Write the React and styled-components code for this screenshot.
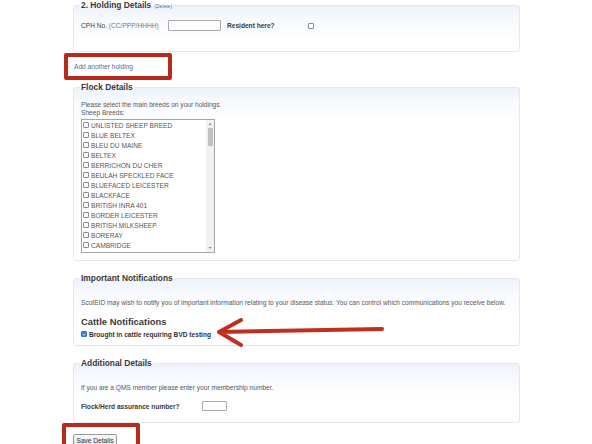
import React from "react";
import styled, { createGlobalStyle } from "styled-components";

const Global = createGlobalStyle`
  html, body { margin: 0; padding: 0; background: #fff; }
  body { font-family: "Liberation Sans", Arial, sans-serif; color: #333; }
`;

const Page = styled.div`
  position: relative;
  width: 592px;
  height: 444px;
  overflow: hidden;
  padding-left: 73px;
  box-sizing: border-box;
  display: flex;
  flex-direction: column;
  align-items: flex-start;
`;

const Panel = styled.fieldset`
  margin: ${(p) => p.$mt || 0}px 0 0 0;
  width: 447px;
  box-sizing: border-box;
  border: 1px solid #e3e8f0;
  border-radius: 3px;
  background: linear-gradient(to bottom, #edf2fb 0px, #f7f9fd 14px, #ffffff 34px);
  padding: ${(p) => p.$pt}px 8px ${(p) => p.$pb}px 7px;
  min-width: 0;
`;

const Legend = styled.legend`
  font-size: 8.4px;
  line-height: 10px;
  font-weight: bold;
  color: #3a3a3a;
  padding: 0 1px;
  margin-left: -1px;
`;

const DeleteLink = styled.span`
  font-size: 5px;
  font-weight: normal;
  color: #2f74b8;
  margin-left: 3px;
`;

const Row = styled.div`
  display: flex;
  align-items: center;
  height: ${(p) => p.$h || 11}px;
  margin-top: ${(p) => p.$mt || 0}px;
  font-size: 6.6px;
`;

const Label = styled.span`
  width: ${(p) => p.$w}px;
  flex: none;
  font-weight: ${(p) => (p.$bold ? "bold" : "normal")};
  color: #3a3a3a;
`;

const Hint = styled.span`
  color: #777;
`;

const TextBox = styled.span`
  display: block;
  width: ${(p) => p.$w}px;
  height: ${(p) => p.$h}px;
  box-sizing: border-box;
  border: 1px solid #a9a9a9;
  border-radius: 1px;
  background: #fff;
  margin-right: ${(p) => p.$mr || 0}px;
`;

const Box = styled.span`
  display: inline-flex;
  align-items: center;
  justify-content: center;
  width: 6px;
  height: 6px;
  flex: none;
  box-sizing: border-box;
  border: 1px solid ${(p) => (p.$checked ? "#2a78cc" : "#8a8a8a")};
  background: ${(p) => (p.$checked ? "#3385dc" : "#fff")};
  border-radius: 1px;
`;

const AnnotBox = styled.div`
  margin-left: ${(p) => p.$ml}px;
  margin-top: ${(p) => p.$mt || 0}px;
  width: ${(p) => p.$w}px;
  height: ${(p) => p.$h}px;
  box-sizing: border-box;
  border: 4px solid #b92a1e;
  border-radius: 2px;
  display: flex;
  align-items: ${(p) => (p.$top ? "flex-start" : "center")};
  padding: ${(p) => (p.$top ? "7px 0 0 7px" : "0 0 0 6px")};
  flex: none;
`;

const Link = styled.span`
  font-size: 6.6px;
  color: #3f729c;
`;

const Para = styled.div`
  font-size: 6.6px;
  line-height: 8px;
  color: #595959;
  margin-top: ${(p) => p.$mt || 0}px;
`;

const ListBox = styled.div`
  margin-top: 2px;
  width: 134px;
  height: 134px;
  box-sizing: border-box;
  border: 1px solid #a6a6a6;
  display: flex;
  background: #fff;
`;

const Items = styled.div`
  flex: 1;
  overflow: hidden;
  padding-left: 1px;
`;

const Item = styled.div`
  display: flex;
  align-items: center;
  gap: 2px;
  height: 10px;
  font-size: 6.6px;
  color: #555;
  white-space: nowrap;
`;

const Track = styled.div`
  width: 8px;
  flex: none;
  background: #f1f1f1;
  display: flex;
  flex-direction: column;
  align-items: center;
  padding: 2px 0;
  box-sizing: border-box;
`;

const Arrow = styled.span`
  font-size: 3.5px;
  line-height: 4px;
  color: #666;
`;

const Thumb = styled.div`
  width: 5px;
  height: 18px;
  margin-top: 2px;
  background: #c1c1c1;
  border-radius: 1px;
`;

const Spacer = styled.div`
  flex: 1;
`;

const SubHead = styled.div`
  font-size: 9.4px;
  line-height: 12px;
  font-weight: bold;
  color: #3a3a3a;
  margin-top: 9px;
`;

const CheckRow = styled.div`
  display: flex;
  align-items: center;
  gap: 2px;
  height: 8px;
  margin-top: 2px;
  font-size: 6.6px;
  font-weight: bold;
  color: #333;
`;

const Button = styled.span`
  display: inline-flex;
  align-items: center;
  height: 12px;
  width: 44px;
  justify-content: center;
  box-sizing: border-box;
  border: 1px solid #9a9a9a;
  border-radius: 2px;
  background: linear-gradient(#f8f8f8, #e6e6e6);
  font-size: 6.6px;
  color: #333;
`;

const ArrowSvg = styled.svg`
  position: absolute;
  left: 210px;
  top: 312px;
`;

const breeds = [
  "UNLISTED SHEEP BREED",
  "BLUE BELTEX",
  "BLEU DU MAINE",
  "BELTEX",
  "BERRICHON DU CHER",
  "BEULAH SPECKLED FACE",
  "BLUEFACED LEICESTER",
  "BLACKFACE",
  "BRITISH INRA 401",
  "BORDER LEICESTER",
  "BRITISH MILKSHEEP",
  "BORERAY",
  "CAMBRIDGE",
  "CASTLEMILK MOORIT",
];

const Tick = () => (
  <svg width="5" height="5" viewBox="0 0 10 10">
    <path d="M2 5.2 L4.2 7.4 L8.2 2.6" fill="none" stroke="#fff" strokeWidth="1.8" />
  </svg>
);

export default function App() {
  return (
    <>
      <Global />
      <Page>
        <Panel $pt={9} $pb={20}>
          <Legend>
            2. Holding Details<DeleteLink>(Delete)</DeleteLink>
          </Legend>
          <Row>
            <Label $w={87}>
              CPH No. <Hint>(CC/PPP/HHHH)</Hint>
            </Label>
            <TextBox $w={53} $h={11} $mr={6} />
            <Label $w={81} $bold>
              Resident here?
            </Label>
            <Box />
          </Row>
        </Panel>

        <AnnotBox $ml={-9} $mt={1} $w={108} $h={27}>
          <Link>Add another holding</Link>
        </AnnotBox>

        <Panel $mt={2} $pt={9} $pb={7}>
          <Legend>Flock Details</Legend>
          <Para>Please select the main breeds on your holdings.</Para>
          <Para>Sheep Breeds:</Para>
          <ListBox>
            <Items>
              {breeds.map((b) => (
                <Item key={b}>
                  <Box />
                  {b}
                </Item>
              ))}
            </Items>
            <Track>
              <Arrow>▲</Arrow>
              <Thumb />
              <Spacer />
              <Arrow>▼</Arrow>
            </Track>
          </ListBox>
        </Panel>

        <Panel $mt={12} $pt={16} $pb={7}>
          <Legend>Important Notifications</Legend>
          <Para>
            ScotEID may wish to notify you of important information relating to your disease status. You can
            control which communications you receive below.
          </Para>
          <SubHead>Cattle Notifications</SubHead>
          <CheckRow>
            <Box $checked>
              <Tick />
            </Box>
            Brought in cattle requiring BVD testing
          </CheckRow>
        </Panel>

        <Panel $mt={12} $pt={16} $pb={11}>
          <Legend>Additional Details</Legend>
          <Para>If you are a QMS member please enter your membership number.</Para>
          <Row $mt={9} $h={10}>
            <Label $w={121} $bold>
              Flock/Herd assurance number?
            </Label>
            <TextBox $w={25} $h={10} />
          </Row>
        </Panel>

        <AnnotBox $ml={-11} $w={78} $h={30} $top>
          <Button>Save Details</Button>
        </AnnotBox>

        <ArrowSvg width="180" height="40" viewBox="0 0 180 40">
          <path
            d="M9 20 L172 17 M31 8 L9 20 L31 33"
            fill="none"
            stroke="#bf2f1f"
            strokeWidth="4"
            strokeLinecap="round"
            strokeLinejoin="round"
          />
        </ArrowSvg>
      </Page>
    </>
  );
}
